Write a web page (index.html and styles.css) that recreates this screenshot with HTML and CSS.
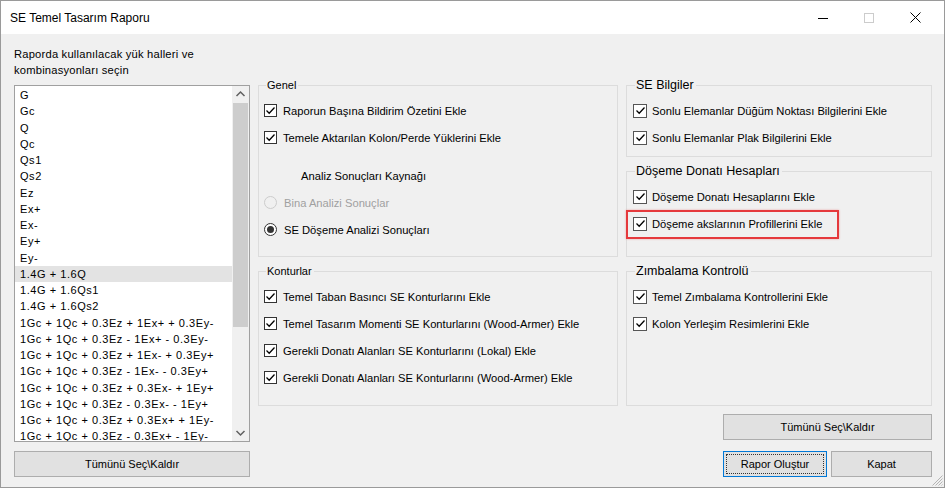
FILE: index.html
```html
<!DOCTYPE html>
<html lang="tr">
<head>
  <meta charset="UTF-8" />
  <title>SE Temel Tasarım Raporu</title>
  <link rel="stylesheet" href="styles.css">
</head>
<body>
  <div class="window">
    <div class="titlebar">
      <span class="title">SE Temel Tasarım Raporu</span>
      <div class="controls">
        <span class="ctl"><svg width="10" height="10" viewBox="0 0 10 10"><path d="M0 5.5 H10" stroke="#000" stroke-width="1"/></svg></span>
        <span class="ctl"><svg width="10" height="10" viewBox="0 0 10 10"><rect x="0.5" y="0.5" width="9" height="9" fill="none" stroke="#cccccc" stroke-width="1"/></svg></span>
        <span class="ctl"><svg width="11" height="11" viewBox="0 0 11 11"><path d="M0.5 0.5 L10.5 10.5 M10.5 0.5 L0.5 10.5" stroke="#000" stroke-width="1"/></svg></span>
      </div>
    </div>

    <div class="content">
      <div class="left">
        <div class="prompt">Raporda kullanılacak yük halleri ve<br>kombinasyonları seçin</div>
        <div class="listbox">
          <ul class="items">
            <li>G</li>
            <li>Gc</li>
            <li>Q</li>
            <li>Qc</li>
            <li>Qs1</li>
            <li>Qs2</li>
            <li>Ez</li>
            <li>Ex+</li>
            <li>Ex-</li>
            <li>Ey+</li>
            <li>Ey-</li>
            <li class="sel">1.4G + 1.6Q</li>
            <li>1.4G + 1.6Qs1</li>
            <li>1.4G + 1.6Qs2</li>
            <li>1Gc + 1Qc + 0.3Ez + 1Ex+ + 0.3Ey-</li>
            <li>1Gc + 1Qc + 0.3Ez - 1Ex+ - 0.3Ey-</li>
            <li>1Gc + 1Qc + 0.3Ez + 1Ex- + 0.3Ey+</li>
            <li>1Gc + 1Qc + 0.3Ez - 1Ex- - 0.3Ey+</li>
            <li>1Gc + 1Qc + 0.3Ez + 0.3Ex- + 1Ey+</li>
            <li>1Gc + 1Qc + 0.3Ez - 0.3Ex- - 1Ey+</li>
            <li>1Gc + 1Qc + 0.3Ez + 0.3Ex+ + 1Ey-</li>
            <li>1Gc + 1Qc + 0.3Ez - 0.3Ex+ - 1Ey-</li>
          </ul>
          <div class="scrollbar">
            <div class="sb-btn"><svg width="17" height="17" viewBox="0 0 17 17"><path d="M4.5 10 L8.5 6 L12.5 10" fill="none" stroke="#606060" stroke-width="1.5"/></svg></div>
            <div class="sb-track"><div class="sb-thumb"></div></div>
            <div class="sb-btn"><svg width="17" height="17" viewBox="0 0 17 17"><path d="M4.5 7 L8.5 11 L12.5 7" fill="none" stroke="#606060" stroke-width="1.5"/></svg></div>
          </div>
        </div>
        <button class="btn select-all">Tümünü Seç\Kaldır</button>
      </div>

      <div class="panels">
        <div class="top-row">
          <div class="group genel">
            <span class="legend">Genel</span>
            <div class="row"><span class="cb"><svg width="11" height="11" viewBox="0 0 11 11"><path d="M1.5 5.5 L4.2 8.2 L9.5 2.5" fill="none" stroke="#000" stroke-width="1.3"/></svg></span>Raporun Başına Bildirim Özetini Ekle</div>
            <div class="row"><span class="cb"><svg width="11" height="11" viewBox="0 0 11 11"><path d="M1.5 5.5 L4.2 8.2 L9.5 2.5" fill="none" stroke="#000" stroke-width="1.3"/></svg></span>Temele Aktarılan Kolon/Perde Yüklerini Ekle</div>
            <div class="row caption">Analiz Sonuçları Kaynağı</div>
            <div class="row disabled"><span class="rb"></span>Bina Analizi Sonuçlar</div>
            <div class="row"><span class="rb on"></span>SE Döşeme Analizi Sonuçları</div>
          </div>
          <div class="stack">
            <div class="group se-info">
              <span class="legend big">SE Bilgiler</span>
              <div class="row"><span class="cb"><svg width="11" height="11" viewBox="0 0 11 11"><path d="M1.5 5.5 L4.2 8.2 L9.5 2.5" fill="none" stroke="#000" stroke-width="1.3"/></svg></span>Sonlu Elemanlar Düğüm Noktası Bilgilerini Ekle</div>
              <div class="row"><span class="cb"><svg width="11" height="11" viewBox="0 0 11 11"><path d="M1.5 5.5 L4.2 8.2 L9.5 2.5" fill="none" stroke="#000" stroke-width="1.3"/></svg></span>Sonlu Elemanlar Plak Bilgilerini Ekle</div>
            </div>
            <div class="group donati">
              <span class="legend big">Döşeme Donatı Hesapları</span>
              <div class="row"><span class="cb"><svg width="11" height="11" viewBox="0 0 11 11"><path d="M1.5 5.5 L4.2 8.2 L9.5 2.5" fill="none" stroke="#000" stroke-width="1.3"/></svg></span>Döşeme Donatı Hesaplarını Ekle</div>
              <div class="row"><span class="cb"><svg width="11" height="11" viewBox="0 0 11 11"><path d="M1.5 5.5 L4.2 8.2 L9.5 2.5" fill="none" stroke="#000" stroke-width="1.3"/></svg></span>Döşeme akslarının Profillerini Ekle</div>
              <span class="highlight"></span>
            </div>
          </div>
        </div>

        <div class="mid-row">
          <div class="group konturlar">
            <span class="legend">Konturlar</span>
            <div class="row"><span class="cb"><svg width="11" height="11" viewBox="0 0 11 11"><path d="M1.5 5.5 L4.2 8.2 L9.5 2.5" fill="none" stroke="#000" stroke-width="1.3"/></svg></span>Temel Taban Basıncı SE Konturlarını Ekle</div>
            <div class="row"><span class="cb"><svg width="11" height="11" viewBox="0 0 11 11"><path d="M1.5 5.5 L4.2 8.2 L9.5 2.5" fill="none" stroke="#000" stroke-width="1.3"/></svg></span>Temel Tasarım Momenti SE Konturlarını (Wood-Armer) Ekle</div>
            <div class="row"><span class="cb"><svg width="11" height="11" viewBox="0 0 11 11"><path d="M1.5 5.5 L4.2 8.2 L9.5 2.5" fill="none" stroke="#000" stroke-width="1.3"/></svg></span>Gerekli Donatı Alanları SE Konturlarını (Lokal) Ekle</div>
            <div class="row"><span class="cb"><svg width="11" height="11" viewBox="0 0 11 11"><path d="M1.5 5.5 L4.2 8.2 L9.5 2.5" fill="none" stroke="#000" stroke-width="1.3"/></svg></span>Gerekli Donatı Alanları SE Konturlarını (Wood-Armer) Ekle</div>
          </div>
          <div class="group zimbalama">
            <span class="legend big">Zımbalama Kontrolü</span>
            <div class="row"><span class="cb"><svg width="11" height="11" viewBox="0 0 11 11"><path d="M1.5 5.5 L4.2 8.2 L9.5 2.5" fill="none" stroke="#000" stroke-width="1.3"/></svg></span>Temel Zımbalama Kontrollerini Ekle</div>
            <div class="row"><span class="cb"><svg width="11" height="11" viewBox="0 0 11 11"><path d="M1.5 5.5 L4.2 8.2 L9.5 2.5" fill="none" stroke="#000" stroke-width="1.3"/></svg></span>Kolon Yerleşim Resimlerini Ekle</div>
          </div>
        </div>

        <div class="actions">
          <button class="btn select-all">Tümünü Seç\Kaldır</button>
          <div class="btn-row">
            <button class="btn primary">Rapor Oluştur</button>
            <button class="btn close">Kapat</button>
          </div>
        </div>
      </div>
    </div>

    <svg class="grip" width="12" height="12" viewBox="0 0 12 12">
      <path d="M11.5 1.5 L1.5 11.5 M11.5 4.5 L4.5 11.5 M11.5 7.5 L7.5 11.5 M11.5 10.5 L10.5 11.5" stroke="#b4b4b4" stroke-width="1"/>
    </svg>
  </div>
</body>
</html>
```

FILE: styles.css
```css
body {
  margin: 0;
  font-family: 'Liberation Sans', Arial, sans-serif;
  font-size: 11.2px;
  color: #000;
  background: #fff;
}

.window {
  position: relative;
  width: 945px;
  height: 488px;
  box-sizing: border-box;
  border: 1px solid #9a9a9a;
  background: #f0f0f0;
  overflow: hidden;
}

/* title bar */
.titlebar {
  height: 33px;
  background: #fff;
  display: flex;
  align-items: center;
  justify-content: space-between;
}

.title {
  font-size: 12px;
  padding-left: 9px;
  padding-top: 1px;
}

.controls {
  display: flex;
  padding-right: 6px;
}

.ctl {
  width: 46px;
  height: 33px;
  display: flex;
  align-items: center;
  justify-content: center;
}

/* main area */
.content {
  display: flex;
  gap: 8px;
  padding: 12px 12px 0 13px;
}

.left {
  width: 236px;
  display: flex;
  flex-direction: column;
}

.prompt {
  height: 32px;
  line-height: 16px;
  letter-spacing: 0.2px;
  white-space: nowrap;
}

.listbox {
  margin-top: 7px;
  height: 357px;
  box-sizing: border-box;
  border: 1px solid #a0a0a0;
  background: #fff;
  display: flex;
}

.items {
  flex: 1;
  margin: 0;
  padding: 1px 0 0;
  list-style: none;
  overflow: hidden;
  white-space: nowrap;
  font-size: 11px;
}

.items li {
  height: 16.25px;
  line-height: 16.25px;
  padding-left: 5px;
  letter-spacing: 0.55px;
}

.items li.sel {
  background: #e3e3e3;
}

.scrollbar {
  width: 17px;
  display: flex;
  flex-direction: column;
  background: #f0f0f0;
}

.sb-btn {
  height: 17px;
}

.sb-btn svg {
  display: block;
}

.sb-track {
  flex: 1;
}

.sb-thumb {
  height: 224px;
  margin: 0 1px;
  background: #cdcdcd;
}

/* buttons */
.btn {
  font-family: inherit;
  font-size: 11px;
  color: #000;
  background: #e1e1e1;
  border: 1px solid #adadad;
  height: 26px;
  padding: 0;
  box-sizing: border-box;
}

.left .select-all {
  margin-top: 9px;
  width: 236px;
}

.btn.primary {
  border-color: #0078d7;
  outline: 1px dotted #333;
  outline-offset: -4px;
}

/* group boxes */
.panels {
  margin-top: 39px;
  display: flex;
  flex-direction: column;
}

.top-row, .mid-row {
  display: flex;
  gap: 8px;
}

.top-row {
  height: 172px;
}

.mid-row {
  margin-top: 14px;
  height: 135px;
}

.stack {
  width: 306px;
  display: flex;
  flex-direction: column;
  gap: 14px;
}

.group {
  position: relative;
  box-sizing: border-box;
  border: 1px solid #dcdcdc;
  padding: 11px 5px 0;
}

.genel, .konturlar {
  width: 360px;
}

.zimbalama {
  width: 306px;
}

.se-info {
  height: 72px;
}

.donati {
  height: 86px;
}

.legend {
  position: absolute;
  top: -7px;
  left: 7px;
  padding: 0 2px 0 1px;
  line-height: 13px;
  font-size: 11px;
  background: #f0f0f0;
}

.legend.big {
  font-size: 12.5px;
  line-height: 15px;
  top: -8px;
  left: 8px;
}

.row {
  height: 27px;
  display: flex;
  align-items: center;
  white-space: nowrap;
}

.row.caption {
  margin-top: 11px;
  padding-left: 37px;
}

.row.disabled {
  color: #a0a0a0;
}

.cb {
  width: 13px;
  height: 13px;
  box-sizing: border-box;
  border: 1px solid #333;
  background: #fff;
  margin-right: 6px;
  display: flex;
  align-items: center;
  justify-content: center;
}

.cb svg {
  display: block;
}

.se-info .cb, .donati .cb, .zimbalama .cb {
  width: 14px;
  height: 14px;
  border-color: #555;
  margin-left: 1px;
  margin-right: 5px;
}

.rb {
  width: 13px;
  height: 13px;
  box-sizing: border-box;
  border: 1px solid #333;
  border-radius: 50%;
  background: #fff;
  margin-right: 7px;
  display: flex;
  align-items: center;
  justify-content: center;
}

.disabled .rb {
  border-color: #cccccc;
  background: #f0f0f0;
}

.rb.on::after {
  content: "";
  width: 7px;
  height: 7px;
  border-radius: 50%;
  background: #333;
}

.highlight {
  position: absolute;
  left: -1px;
  top: 38px;
  width: 213px;
  height: 29px;
  box-sizing: border-box;
  border: 2px solid #e5393c;
  box-shadow: 0 0 2px rgba(229, 57, 60, 0.4);
}

/* bottom right actions */
.actions {
  align-self: flex-end;
  width: 209px;
  margin-top: 8px;
  display: flex;
  flex-direction: column;
}

.actions .select-all {
  width: 209px;
}

.btn-row {
  margin-top: 11px;
  display: flex;
  gap: 4px;
}

.btn-row .primary {
  width: 104px;
}

.btn-row .close {
  width: 101px;
}

.grip {
  position: absolute;
  right: 1px;
  bottom: 1px;
}
```
